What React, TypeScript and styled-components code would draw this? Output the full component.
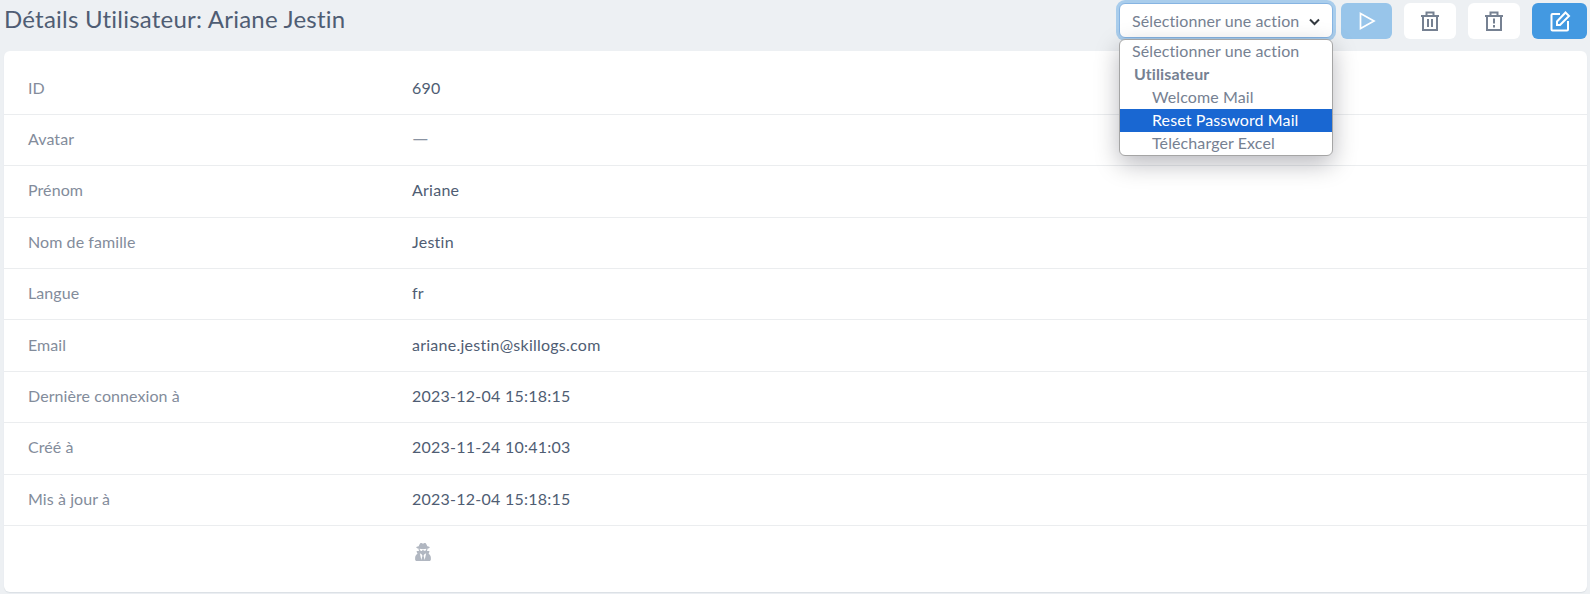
import React from "react";
import styled, { createGlobalStyle } from "styled-components";
import { FaUserSecret } from "react-icons/fa";

const Global = createGlobalStyle`
  html, body { margin: 0; padding: 0; background: #ebedef; }
  body { font-family: "Lato", "Noto Sans", sans-serif; color: #4f5d73; }
`;

const Page = styled.div`
  width: 1590px;
  height: 594px;
  overflow: hidden;
  padding: 3px 3px 0 4px;
  box-sizing: border-box;
  background: #edf0f3;
`;

const Header = styled.header`
  display: flex;
  align-items: flex-start;
  justify-content: space-between;
  height: 48px;
`;

const Title = styled.h1`
  margin: 0;
  font-size: 24px;
  line-height: 32px;
  letter-spacing: 0.22px;
  font-weight: 400;
  color: #4f5d73;
`;

const Actions = styled.div`
  display: flex;
  align-items: flex-start;
  gap: 12px;
`;

const SelectWrap = styled.div`
  position: relative;
  width: 214px;
  margin-right: -4px;
`;

const SelectBox = styled.div`
  display: flex;
  align-items: center;
  justify-content: space-between;
  height: 35px;
  box-sizing: border-box;
  padding: 0 12px;
  background: #fff;
  border: 1px solid #86b4e2;
  border-radius: 6px;
  box-shadow: 0 0 0 3px #a9cdec;
  font-size: 16px;
  letter-spacing: 0.1px;
  color: #768192;
`;

const SelectText = styled.span`
  margin-bottom: 1px;
`;

const Chevron = styled.svg`
  margin-top: 2px;
`;

const Menu = styled.ul`
  position: absolute;
  top: 36px;
  left: 0;
  right: 0;
  margin: 0;
  padding: 0;
  list-style: none;
  background: #fff;
  border: 1px solid #a5a5a5;
  border-radius: 6px;
  overflow: hidden;
  box-shadow: 0 8px 24px rgba(0, 0, 21, 0.28);
  z-index: 2;
`;

const Option = styled.li<{ $indent?: boolean; $active?: boolean; $group?: boolean }>`
  height: 23px;
  line-height: 22px;
  font-size: 16px;
  letter-spacing: 0.1px;
  white-space: nowrap;
  padding-left: ${(p) => (p.$indent ? "32px" : p.$group ? "14px" : "12px")};
  font-weight: ${(p) => (p.$group ? 700 : 400)};
  background: ${(p) => (p.$active ? "#1967d2" : "transparent")};
  color: ${(p) => (p.$active ? "#fff" : "#768192")};
`;

const IconButton = styled.button<{ $bg: string; $width?: number }>`
  display: flex;
  align-items: center;
  justify-content: center;
  width: ${(p) => p.$width ?? 52}px;
  height: 36px;
  padding: 0;
  border: 0;
  border-radius: 6px;
  background: ${(p) => p.$bg};
`;

const Card = styled.main`
  height: 541px;
  box-sizing: border-box;
  padding-top: 12.4px;
  background: #fff;
  border-radius: 6px;
  box-shadow: 0 1px 1px rgba(60, 75, 100, 0.1);
`;

const Row = styled.div<{ $plain?: boolean }>`
  display: grid;
  grid-template-columns: 408px 1fr;
  align-items: center;
  height: 51.4px;
  padding-bottom: 3px;
  box-sizing: border-box;
  border-bottom: ${(p) => (p.$plain ? "0" : "1px solid #ebedef")};
  font-size: 16px;
`;

const Label = styled.div`
  padding-left: 24px;
  letter-spacing: 0.08px;
  color: #838c9b;
`;

const Value = styled.div`
  letter-spacing: 0.25px;
  color: #4f5d73;
`;

const Dash = styled(Value)`
  font-size: 21px;
  line-height: 24px;
  letter-spacing: 0;
  color: #8a93a2;
`;

const SecretIcon = styled(FaUserSecret)`
  display: block;
  width: 16px;
  height: 18px;
  margin: 4px 0 0 3px;
  color: #b1b7c1;
`;

const rows: [string, string][] = [
  ["ID", "690"],
  ["Avatar", "—"],
  ["Prénom", "Ariane"],
  ["Nom de famille", "Jestin"],
  ["Langue", "fr"],
  ["Email", "ariane.jestin@skillogs.com"],
  ["Dernière connexion à", "2023-12-04 15:18:15"],
  ["Créé à", "2023-11-24 10:41:03"],
  ["Mis à jour à", "2023-12-04 15:18:15"],
];

const Glyph: React.FC<{ color: string; width?: number; children: React.ReactNode }> = ({ color, width = 2, children }) => (
  <svg width="22" height="22" viewBox="0 0 22 22" fill="none" stroke={color} strokeWidth={width}>
    {children}
  </svg>
);

const Bin = () => <path d="M2 6h18M7.5 6V2.5h7V6M4 6v14h14V6" />;

export default function App() {
  return (
    <Page>
      <Global />
      <Header>
        <Title>Détails Utilisateur: Ariane Jestin</Title>
        <Actions>
          <SelectWrap>
            <SelectBox>
              <SelectText>Sélectionner une action</SelectText>
              <Chevron width="11" height="8" viewBox="0 0 11 8" fill="none" stroke="#343a40" strokeWidth="2">
                <path d="M1 1.5l4.5 4.5L10 1.5" />
              </Chevron>
            </SelectBox>
            <Menu>
              <Option>Sélectionner une action</Option>
              <Option $group>Utilisateur</Option>
              <Option $indent>Welcome Mail</Option>
              <Option $indent $active>Reset Password Mail</Option>
              <Option $indent>Télécharger Excel</Option>
            </Menu>
          </SelectWrap>
          <IconButton $bg="#98c5ea" $width={51} aria-label="Exécuter">
            <Glyph color="#fff" width={1.7}>
              <path d="M4.5 3.5L18 11L4.5 18.5Z" />
            </Glyph>
          </IconButton>
          <IconButton $bg="#fff" aria-label="Supprimer">
            <Glyph color="#768192">
              <Bin />
              <path d="M9 9v8M13 9v8" />
            </Glyph>
          </IconButton>
          <IconButton $bg="#fff" aria-label="Forcer la suppression">
            <Glyph color="#768192">
              <Bin />
              <path d="M11 8.5v5M11 15v2.5" />
            </Glyph>
          </IconButton>
          <IconButton $bg="#4399e1" $width={55} aria-label="Modifier">
            <Glyph color="#fff">
              <path d="M11 4H3.5a1 1 0 0 0-1 1v14.5a1 1 0 0 0 1 1H18a1 1 0 0 0 1-1V11" />
              <path d="M8 11.5L16.5 2.5l3.5 3.5L11 15H8Z" />
            </Glyph>
          </IconButton>
        </Actions>
      </Header>
      <Card>
        {rows.map(([label, value]) => (
          <Row key={label}>
            <Label>{label}</Label>
            {value === "—" ? <Dash>{value}</Dash> : <Value>{value}</Value>}
          </Row>
        ))}
        <Row $plain>
          <Label />
          <Value>
            <SecretIcon />
          </Value>
        </Row>
      </Card>
    </Page>
  );
}
